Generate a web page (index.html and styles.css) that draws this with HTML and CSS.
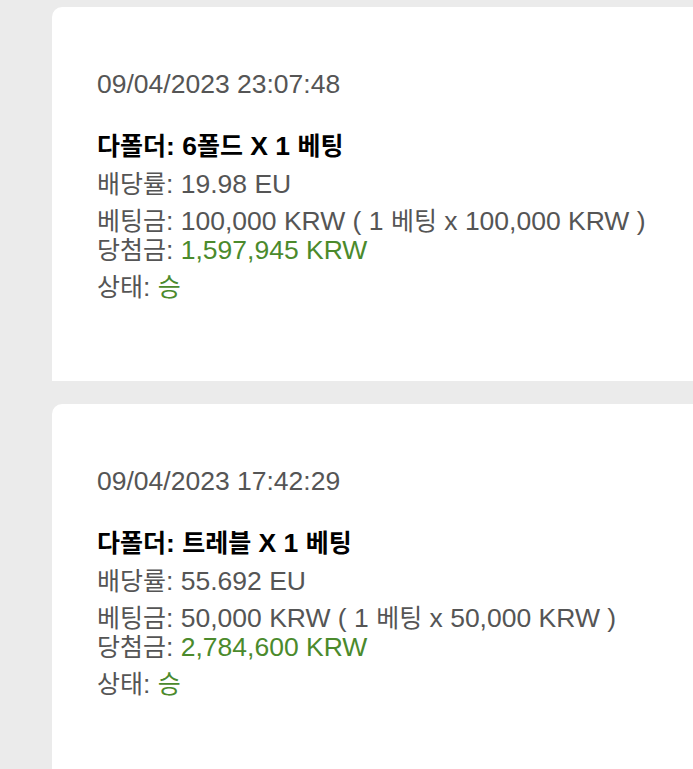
FILE: index.html
```html
<!DOCTYPE html>
<html lang="ko">
<head>
<meta charset="utf-8">
<link rel="stylesheet" href="styles.css">
</head>
<body>
<div class="list">
  <div class="card">
    <div class="date">09/04/2023 23:07:48</div>
    <div class="title"><span class="k">다폴더</span>: 6<span class="k">폴드</span> X 1 <span class="k">베팅</span></div>
    <div class="row"><span class="k">배당률</span>: 19.98 EU</div>
    <div class="row"><span class="k">베팅금</span>: 100,000 KRW ( 1 <span class="k">베팅</span> x 100,000 KRW )<br><span class="k">당첨금</span>: <span class="win">1,597,945 KRW</span></div>
    <div class="row"><span class="k">상태</span>: <span class="win k">승</span></div>
  </div>
  <div class="card">
    <div class="date">09/04/2023 17:42:29</div>
    <div class="title"><span class="k">다폴더</span>: <span class="k">트레블</span> X 1 <span class="k">베팅</span></div>
    <div class="row"><span class="k">배당률</span>: 55.692 EU</div>
    <div class="row"><span class="k">베팅금</span>: 50,000 KRW ( 1 <span class="k">베팅</span> x 50,000 KRW )<br><span class="k">당첨금</span>: <span class="win">2,784,600 KRW</span></div>
    <div class="row"><span class="k">상태</span>: <span class="win k">승</span></div>
  </div>
</div>
</body>
</html>
```

FILE: styles.css
```css
html, body {
  margin: 0;
  padding: 0;
  background: #ebebeb;
}
body {
  font-family: "Liberation Sans", "Noto Sans CJK KR", sans-serif;
  font-size: 26.5px;
  line-height: 29px;
  color: #555555;
}
.k {
  font-size: 25px;
  line-height: 1;
}
.list {
  display: flex;
  flex-direction: column;
  gap: 23px;
  padding: 7px 0 0 52px;
}
.card {
  background: #ffffff;
  border-top-left-radius: 10px;
  padding: 63px 0 79px 45px;
  display: flex;
  flex-direction: column;
  gap: 8px;
}
.date {
  margin-bottom: 25px;
}
.title {
  font-weight: bold;
  color: #000000;
  margin-bottom: 1px;
}
.win {
  color: #4b8a2c;
}
```
